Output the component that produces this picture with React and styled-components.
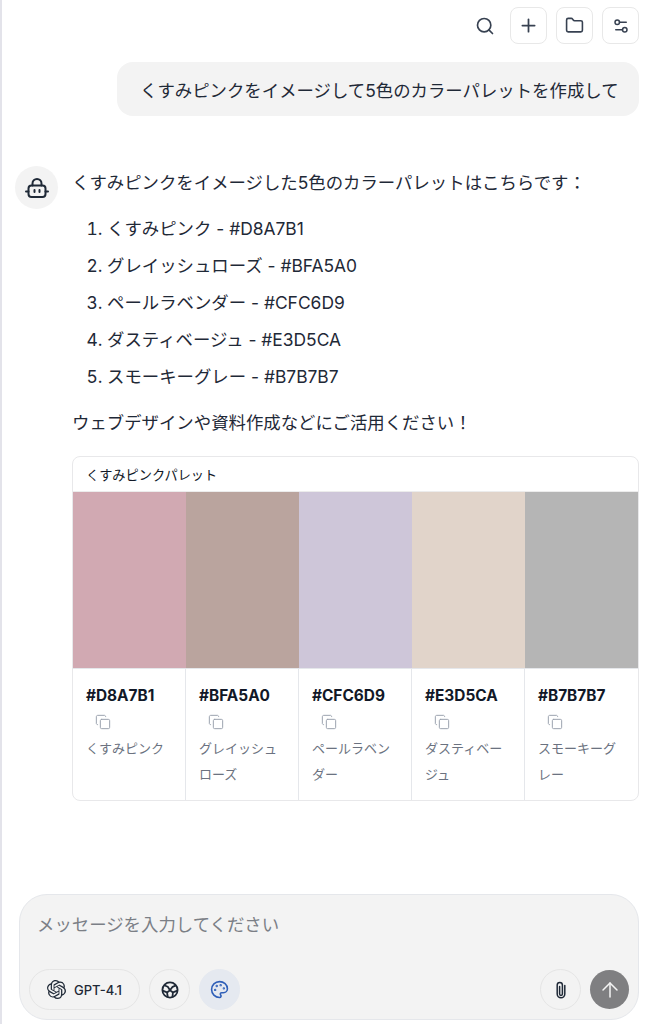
import React from "react";
import styled, { createGlobalStyle } from "styled-components";
import { Search, Plus, Folder, Settings2, Copy, Palette, ArrowUp } from "lucide-react";
import { SiOpenai } from "react-icons/si";

const GlobalStyle = createGlobalStyle`
  html, body { margin: 0; padding: 0; background: #fff; }
  * { box-sizing: border-box; }
  body { font-family: Inter, "Noto Sans CJK JP", sans-serif; color: #1f2937; }
`;

const Page = styled.div`
  width: 657px;
  height: 1024px;
  border-left: 2px solid #e3e3ea;
  display: flex;
  flex-direction: column;
  overflow: hidden;
`;

const Toolbar = styled.div`
  height: 37px;
  margin-top: 7px;
  padding-right: 18px;
  display: flex;
  justify-content: flex-end;
  align-items: center;
  gap: 9px;
`;

const PlainIcon = styled.div`
  width: 37px;
  height: 37px;
  display: flex;
  align-items: center;
  justify-content: center;
  color: #374151;
`;

const SearchSlot = styled(PlainIcon)`
  margin-right: -2px;
`;

const ToolButton = styled(PlainIcon)`
  border: 1px solid #e8e8e8;
  border-radius: 8px;
`;

const UserRow = styled.div`
  display: flex;
  justify-content: flex-end;
  padding-right: 18px;
  margin-top: 18px;
`;

const UserBubble = styled.div`
  width: 522px;
  height: 54px;
  background: #f3f3f3;
  border-radius: 16px;
  padding-left: 23px;
  display: flex;
  align-items: center;
  font-size: 17.4px;
  color: #1f2937;
`;

const BotRow = styled.div`
  display: flex;
  margin-top: 50px;
  padding: 0 18px 0 13px;
  gap: 14px;
`;

const Avatar = styled.div`
  width: 43px;
  height: 43px;
  flex: none;
  border-radius: 50%;
  background: #f3f3f3;
  display: flex;
  align-items: center;
  justify-content: center;
`;

const Reply = styled.div`
  flex: 1;
  min-width: 0;
`;

const Line = styled.p`
  margin: 0;
  height: 32px;
  line-height: 34px;
  font-size: 17.4px;
`;

const Steps = styled.ol`
  margin: 12px 0 11px;
  padding: 0 0 0 35px;
  font-size: 17.4px;
  list-style: decimal;
`;

const Step = styled.li`
  height: 37px;
  line-height: 37px;
`;

const PaletteCard = styled.div`
  margin-top: 18px;
  height: 345px;
  border: 1px solid #e8e8ea;
  border-radius: 8px;
  overflow: hidden;
  display: flex;
  flex-direction: column;
`;

const CardTitle = styled.div`
  height: 35px;
  padding-left: 13px;
  display: flex;
  align-items: center;
  font-size: 13.2px;
  border-bottom: 1px solid #ececec;
  color: #111827;
`;

const Swatches = styled.div`
  display: grid;
  grid-template-columns: repeat(5, 1fr);
  flex: 1;
`;

const SwatchColumn = styled.div`
  display: flex;
  flex-direction: column;
  min-width: 0;
  &:not(:last-child) > div:last-child {
    border-right: 1px solid #e5e7eb;
  }
`;

const ColorBlock = styled.div`
  height: 176px;
  background: ${(p) => p.$color};
`;

const SwatchInfo = styled.div`
  flex: 1;
  border-top: 1px solid #e5e7eb;
  padding: 17px 12px 0 13px;
`;

const HexCode = styled.div`
  font-size: 15.4px;
  font-weight: 700;
  line-height: 20px;
  color: #111827;
`;

const CopyButton = styled.div`
  height: 16px;
  margin: 8px 0 0 9px;
  color: #9ca3af;
  display: flex;
  align-items: center;
`;

const SwatchName = styled.div`
  margin-top: 5px;
  font-size: 13px;
  line-height: 26px;
  color: #6b7280;
`;

const Spacer = styled.div`
  flex: 1;
`;

const Composer = styled.div`
  margin: 0 18px 4px 17px;
  height: 126px;
  flex: none;
  background: #f3f3f3;
  border: 1px solid #e5e7eb;
  border-radius: 28px;
  padding: 18px 9px 9px 9px;
  display: flex;
  flex-direction: column;
`;

const Placeholder = styled.div`
  padding-left: 8px;
  font-size: 17.4px;
  line-height: 24px;
  color: #7b7f86;
`;

const ComposerActions = styled.div`
  margin-top: auto;
  display: flex;
  align-items: center;
  gap: 9px;
`;

const ModelPill = styled.div`
  width: 111px;
  height: 41px;
  border: 1px solid #e5e5e5;
  border-radius: 21px;
  display: flex;
  align-items: center;
  justify-content: center;
  gap: 8px;
  font-size: 13px;
  font-weight: 500;
  color: #1f2937;
`;

const RoundButton = styled.div`
  width: 41px;
  height: 41px;
  flex: none;
  border-radius: 50%;
  border: 1px solid ${(p) => (p.$active ? "#e5e9f0" : "#e5e5e5")};
  background: ${(p) => (p.$active ? "#e5e9f0" : "transparent")};
  color: ${(p) => (p.$active ? "#2f5fb8" : "#1f2937")};
  display: flex;
  align-items: center;
  justify-content: center;
`;

const SendButton = styled.div`
  width: 39px;
  height: 39px;
  flex: none;
  border-radius: 50%;
  background: #7f7f81;
  color: #f4f4f4;
  display: flex;
  align-items: center;
  justify-content: center;
`;

const BotIcon = () => (
  <svg width="24" height="24" viewBox="0 0 24 24" fill="none" stroke="#1f2937" strokeWidth="2" strokeLinecap="round">
    <rect x="3.5" y="9.5" width="17" height="11.5" rx="3" />
    <path d="M7.5 9.5V7.5a4.5 4.5 0 0 1 9 0v2" />
    <path d="M1 15.5h2.5M20.5 15.5H23M9.5 14v2M14.5 14v2" />
  </svg>
);

const GlobeIcon = () => (
  <svg width="18" height="18" viewBox="0 0 18 18" fill="none" stroke="#1f2937" strokeWidth="1.8" strokeLinejoin="round">
    <circle cx="9" cy="9" r="7.6" />
    <path d="M3.2 4.2l3.6 1.6L9 9.2l2.6-3.4 3.4-1.4M9 9.2l-3 2.2.8 4.6M9 9.2l3 2.2-.6 4.6M1.6 9.6L6 11.4M16.4 9.6L12 11.4" />
  </svg>
);

const ClipIcon = () => (
  <svg width="18" height="20" viewBox="0 0 18 20" fill="none" stroke="#1f2937" strokeWidth="1.5" strokeLinecap="round">
    <path d="M7.6 6.5v7.6a1.4 1.4 0 0 0 2.8 0V5a2.6 2.6 0 0 0-5.2 0v9a3.8 3.8 0 0 0 7.6 0V5.6" />
  </svg>
);

const swatches = [
  { hex: "#D8A7B1", color: "#d1a9b2", name: "くすみピンク" },
  { hex: "#BFA5A0", color: "#baa49e", name: "グレイッシュローズ" },
  { hex: "#CFC6D9", color: "#cec6d9", name: "ペールラベンダー" },
  { hex: "#E3D5CA", color: "#e1d4ca", name: "ダスティベージュ" },
  { hex: "#B7B7B7", color: "#b5b5b5", name: "スモーキーグレー" },
];

const steps = [
  "くすみピンク - #D8A7B1",
  "グレイッシュローズ - #BFA5A0",
  "ペールラベンダー - #CFC6D9",
  "ダスティベージュ - #E3D5CA",
  "スモーキーグレー - #B7B7B7",
];

export default function App() {
  return (
    <Page>
      <GlobalStyle />
      <Toolbar>
        <SearchSlot><Search size={20} strokeWidth={2} /></SearchSlot>
        <ToolButton><Plus size={21} strokeWidth={2} /></ToolButton>
        <ToolButton><Folder size={19} strokeWidth={2} /></ToolButton>
        <ToolButton><Settings2 size={18} strokeWidth={2} /></ToolButton>
      </Toolbar>

      <UserRow>
        <UserBubble>くすみピンクをイメージして5色のカラーパレットを作成して</UserBubble>
      </UserRow>

      <BotRow>
        <Avatar><BotIcon /></Avatar>
        <Reply>
          <Line>くすみピンクをイメージした5色のカラーパレットはこちらです：</Line>
          <Steps>
            {steps.map((s) => <Step key={s}>{s}</Step>)}
          </Steps>
          <Line>ウェブデザインや資料作成などにご活用ください！</Line>
          <PaletteCard>
            <CardTitle>くすみピンクパレット</CardTitle>
            <Swatches>
              {swatches.map((s) => (
                <SwatchColumn key={s.hex}>
                  <ColorBlock $color={s.color} />
                  <SwatchInfo>
                    <HexCode>{s.hex}</HexCode>
                    <CopyButton><Copy size={16} strokeWidth={1.5} /></CopyButton>
                    <SwatchName>{s.name}</SwatchName>
                  </SwatchInfo>
                </SwatchColumn>
              ))}
            </Swatches>
          </PaletteCard>
        </Reply>
      </BotRow>

      <Spacer />

      <Composer>
        <Placeholder>メッセージを入力してください</Placeholder>
        <ComposerActions>
          <ModelPill><SiOpenai size={19} />GPT-4.1</ModelPill>
          <RoundButton><GlobeIcon /></RoundButton>
          <RoundButton $active><Palette size={19} strokeWidth={2} /></RoundButton>
          <Spacer />
          <RoundButton><ClipIcon /></RoundButton>
          <SendButton><ArrowUp size={24} strokeWidth={1.5} /></SendButton>
        </ComposerActions>
      </Composer>
    </Page>
  );
}
